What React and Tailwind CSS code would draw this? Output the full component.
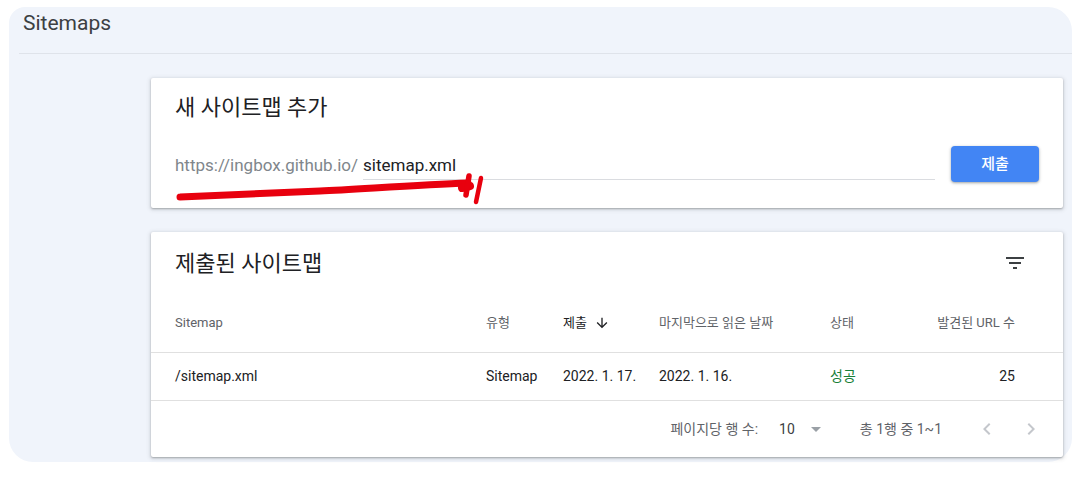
import React from 'react';

const font = { fontFamily: "Roboto, 'Noto Sans CJK KR', 'Noto Sans', sans-serif" };

const cardShadow = 'shadow-[0_1px_2px_rgba(60,64,67,0.35),0_1px_4px_1px_rgba(60,64,67,0.15)]';

const FilterIcon = () => (
  <svg width="24" height="24" viewBox="0 0 24 24" fill="#3c4043">
    <path d="M10 18h4v-2h-4v2zM3 6v2h18V6H3zm3 7h12v-2H6v2z" />
  </svg>
);

const ArrowDown = () => (
  <svg width="16" height="16" viewBox="0 0 24 24" fill="#202124">
    <path d="M20 12l-1.41-1.41L13 16.17V4h-2v12.17l-5.58-5.59L4 12l8 8 8-8z" />
  </svg>
);

const DropDown = () => (
  <svg width="24" height="24" viewBox="0 0 24 24" fill="#9aa0a6">
    <path d="M7 10l5 5 5-5z" />
  </svg>
);

const Chevron = ({ dir }) => (
  <svg width="24" height="24" viewBox="0 0 24 24" fill="#c4c7cc">
    {dir === 'left' ? (
      <path d="M15.41 7.41L14 6l-6 6 6 6 1.41-1.41L10.83 12z" />
    ) : (
      <path d="M10 6L8.59 7.41 13.17 12l-4.58 4.59L10 18l6-6z" />
    )}
  </svg>
);

// hand-drawn red annotation over the URL field
const Scribble = () => (
  <svg className="absolute left-0 top-0 pointer-events-none" width="1081" height="481" viewBox="0 0 1081 481">
    <g fill="none" stroke="#e8000e" strokeLinecap="round">
      <path d="M180 197 C 230 195, 280 193, 320 191 S 420 185, 468 183" strokeWidth="7" />
      <path d="M462 188 L 470 186" strokeWidth="8" />
      <path d="M469 176 L 466 195" strokeWidth="5.5" />
      <path d="M481 178 L 476 202" strokeWidth="4.5" />
    </g>
  </svg>
);

const cols = 'grid grid-cols-[311px_77px_96px_171px_105px_80px] pl-6 items-center';

export default function App() {
  return (
    <div className="w-[1081px] h-[481px] bg-white relative pt-[7px] pl-[9px]" style={font}>
      <div className="w-[1063px] h-[455px] bg-[#f0f4fb] rounded-tl-[16px] rounded-tr-[24px] rounded-b-[24px] flex flex-col">
        <div className="h-[46px] pl-[14px] text-[21px] leading-[33px] text-[#3c4043]">Sitemaps</div>
        <div className="ml-[10px] h-px bg-[#dfe3ea]" />

        <div className="pl-[142px] pr-[9px] pt-[24px] flex flex-col gap-[24px]">
          <div className={`h-[130px] bg-white rounded-[2px] ${cardShadow}`}>
            <div className="px-6 pt-[16px] text-[22px] leading-[28px] text-[#202124]">새 사이트맵 추가</div>
            <div className="flex items-center pl-6 pr-6 mt-[24px] h-[36px]">
              <div className="flex-1 flex items-start h-[36px] mr-[16px]">
                <span className="mt-[6px] leading-[26px] text-[17px] text-[#80868b] mr-[5px]">https://ingbox.github.io/</span>
                <div className="flex-1 h-[34px] pt-[6px] leading-[26px] border-b border-[#dadce0] text-[17px] text-[#202124]">
                  sitemap.xml
                </div>
              </div>
              <button className="w-[88px] h-[36px] rounded-[4px] bg-[#4285f4] text-white text-[15px] font-medium shadow-[0_1px_2px_rgba(60,64,67,0.3),0_1px_3px_1px_rgba(60,64,67,0.15)]">
                제출
              </button>
            </div>
          </div>

          <div className={`h-[225px] bg-white rounded-[2px] flex flex-col ${cardShadow}`}>
            <div className="h-[62px] flex items-center justify-between pl-6 pr-[36px]">
              <span className="text-[22px] text-[#202124]">제출된 사이트맵</span>
              <FilterIcon />
            </div>
            <div className={`${cols} h-[59px] border-b border-[#e0e0e0] text-[13px] text-[#5f6368]`}>
              <span>Sitemap</span>
              <span>유형</span>
              <span className="flex items-center gap-[7px] text-[#202124]">
                제출 <ArrowDown />
              </span>
              <span>마지막으로 읽은 날짜</span>
              <span>상태</span>
              <span className="text-right">발견된 URL 수</span>
            </div>
            <div className={`${cols} h-[48px] border-b border-[#e0e0e0] text-[14px] text-[#202124]`}>
              <span>/sitemap.xml</span>
              <span>Sitemap</span>
              <span>2022. 1. 17.</span>
              <span>2022. 1. 16.</span>
              <span className="text-[#188038]">성공</span>
              <span className="text-right">25</span>
            </div>
            <div className="flex-1 flex items-center justify-end pr-[20px] text-[14px] text-[#5f6368]">
              <span>페이지당 행 수:</span>
              <span className="ml-[21px] text-[#3c4043]">10</span>
              <span className="ml-[9px]"><DropDown /></span>
              <span className="ml-[32px]">총 1행 중 1~1</span>
              <span className="ml-[33px]"><Chevron dir="left" /></span>
              <span className="ml-[20px]"><Chevron dir="right" /></span>
            </div>
          </div>
        </div>
      </div>
      <Scribble />
    </div>
  );
}
